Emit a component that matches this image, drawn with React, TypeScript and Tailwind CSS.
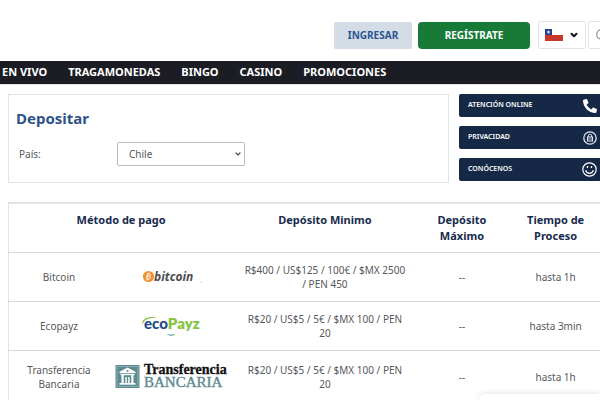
import type { ReactNode } from "react"
import { ChevronDown, Search } from "lucide-react"
import { FaPhone } from "react-icons/fa"

interface PaymentMethod {
  name: string
  logo: ReactNode
  min: string
  max: string
  time: string
}

const navItems = ["EN VIVO", "TRAGAMONEDAS", "BINGO", "CASINO", "PROMOCIONES"]

function ChileFlag() {
  return (
    <svg width="18" height="12" viewBox="0 0 18 12" aria-label="Chile" role="img">
      <rect width="18" height="12" fill="#fff" />
      <rect y="6" width="18" height="6" fill="#c9372c" />
      <rect width="7" height="6" fill="#24418f" />
      <path d="M3.5 1.2l.5 1.3h1.4l-1.1.9.4 1.3-1.2-.8-1.2.8.4-1.3-1.1-.9H3z" fill="#fff" />
    </svg>
  )
}

function LockBadge() {
  return (
    <svg width="14" height="14" viewBox="0 0 14 14" fill="none" stroke="#dfe6ef">
      <circle cx="7" cy="7" r="6.2" strokeWidth="1.3" />
      <path d="M5.3 6V4.9a1.7 1.7 0 0 1 3.4 0V6" strokeWidth="1" />
      <rect x="4.5" y="6" width="5" height="4" strokeWidth="1" />
      <path d="M5 8h4" strokeWidth="0.8" />
    </svg>
  )
}

function SmileBadge() {
  return (
    <svg width="15" height="15" viewBox="0 0 15 15" fill="none" stroke="#fff">
      <circle cx="7.5" cy="7.5" r="6.7" strokeWidth="1.2" />
      <path d="M3.6 8.2c.8 2.200 2.200 3.100 3.900 3.100s3.100-.9 3.900-3.100" strokeWidth="1.2" />
      <path d="M5.500 4v2M9.500 4v2" strokeWidth="1.300" />
    </svg>
  )
}

function BitcoinLogo() {
  return (
    <svg width="64" height="20" viewBox="0 0 64 20" role="img" aria-label="bitcoin">
      <circle cx="9.5" cy="9.5" r="5.6" fill="#ee9330" />
      <g stroke="#fff" fill="none" strokeWidth="1">
        <path d="M8.500 6.700l-1 5.500M8.400 6.900h1.800c1.600 0 1.500 2.200-.1 2.400H8.100M10.100 9.300c1.700.1 1.500 2.700-.4 2.800H7.500" />
        <path d="M10 5.500l-.2 1.200M8.900 12.300l-.2 1.200" strokeWidth="0.7" />
      </g>
      <text x="15" y="14" fontFamily="'Open Sans', sans-serif" fontSize="12" fontStyle="italic" fontWeight="700" fill="#4d4d4f">
        bitcoin
      </text>
      <circle cx="62" cy="15" r="0.6" fill="#b9bcc0" />
    </svg>
  )
}

function EcopayzLogo() {
  return (
    <svg width="60" height="22" viewBox="0 0 60 22" role="img" aria-label="ecoPayz">
      <path d="M1 8.5C2 2.2 11 .8 16 3.200 10 2.400 4 3.400 1.800 8.500z" fill="#7fbf4d" />
      <text x="3" y="14" fontFamily="Lato, sans-serif" fontSize="15" fontWeight="900" fill="#214a87">
        eco<tspan fill="#86c440" fontWeight="800">Payz</tspan>
      </text>
      <path d="M26 19c2.500 1 6 1 8.500 0-2 2.200-6.500 2.200-8.500 0z" fill="#2f8f86" />
    </svg>
  )
}

function BankTransferLogo() {
  return (
    <svg width="114" height="32" viewBox="0 0 114 32" role="img" aria-label="Transferencia Bancaria">
      <rect x="1.5" y="4" width="24" height="23" fill="#5d8a90" />
      <rect x="3" y="5.5" width="21" height="20" fill="none" stroke="#a9c3c6" strokeWidth="0.6" />
      <g fill="#fff">
        <path d="M13.5 6.5l8 4.200v1.600h-16v-1.600z" />
        <rect x="6.500" y="13" width="14" height="1.200" />
        <rect x="7.500" y="14" width="2.200" height="8" />
        <rect x="11.300" y="16" width="1.500" height="6" />
        <rect x="14.200" y="16" width="1.500" height="6" />
        <rect x="17.300" y="14" width="2.200" height="8" />
        <rect x="5.500" y="22" width="16" height="1.700" />
      </g>
      <circle cx="13.500" cy="10" r="1" fill="#5d8a90" />
      <text x="30" y="13" fontFamily="'Liberation Serif', serif" fontSize="14" fontWeight="700" fill="#111" stroke="#111" strokeWidth="0.3">
        Transferencia
      </text>
      <text x="30" y="26" fontFamily="'Liberation Serif', serif" fontSize="15" fill="#5d8a90" stroke="#5d8a90" strokeWidth="0.4">
        BANCARIA
      </text>
    </svg>
  )
}

const methods: PaymentMethod[] = [
  { name: "Bitcoin", logo: <BitcoinLogo />, min: "R$400 / US$125 / 100€ / $MX 2500 /\u00a0PEN 450", max: "--", time: "hasta 1h" },
  { name: "Ecopayz", logo: <EcopayzLogo />, min: "R$20 / US$5 / 5€ / $MX 100 / PEN 20", max: "--", time: "hasta 3min" },
  { name: "Transferencia Bancaria", logo: <BankTransferLogo />, min: "R$20 / US$5 / 5€ / $MX 100 / PEN 20", max: "--", time: "hasta 1h" },
]

const sideLinks = [
  { label: "ATENCIÓN ONLINE", icon: <FaPhone className="size-3.5 -scale-x-100 text-white" /> },
  { label: "PRIVACIDAD", icon: <LockBadge /> },
  { label: "CONÓCENOS", icon: <SmileBadge /> },
]

function Header() {
  return (
    <header>
      <div className="-mr-7 flex h-[61px] items-start justify-end pt-[21px]">
        <div className="flex items-center">
          <button className="h-[27px] w-[78px] rounded-xs bg-[#d4dce6] text-[10px] font-bold text-[#2c5590]">INGRESAR</button>
          <button className="ml-1.5 h-[27px] w-28 rounded-sm bg-[#177a37] text-[10px] font-bold text-white">REGÍSTRATE</button>
          <button aria-label="País e idioma" className="ml-2 flex h-7 w-12 items-center justify-between rounded-xs border border-[#e2e4e9] px-1.5">
            <ChileFlag />
            <ChevronDown className="size-2.5 text-[#15151f]" strokeWidth={5} />
          </button>
          <button aria-label="Buscar" className="ml-0.5 flex h-7 w-10 items-center rounded-xs border border-[#e2e4e9] pl-1.5">
            <Search className="size-3.5 text-[#85878c]" />
          </button>
        </div>
      </div>
      <nav className="flex h-6 items-center gap-[21px] border-b border-[#e3e7f2] bg-[#1b1c24] pl-0.5 text-[11px] font-bold text-white">
        {navItems.map((item) => (
          <a key={item} href="#" className="whitespace-nowrap">
            {item}
          </a>
        ))}
      </nav>
    </header>
  )
}

export default function App() {
  return (
    <div className="relative h-screen overflow-hidden bg-white font-['Noto_Sans',sans-serif] text-[10px] text-[#55585c]">
      <Header />

      {/* Deposit form and side links */}
      <div className="mt-[9px] flex gap-2.5 pl-2">
        <section className="h-[89px] flex-1 border border-[#dfe3e7] px-[7px] pt-3">
          <h1 className="text-[15px] leading-[22px] font-bold text-[#2f5288]">Depositar</h1>
          <div className="mt-[13px] flex items-center pl-[3px]">
            <label htmlFor="country" className="w-[98px]">
              País:
            </label>
            <div className="relative">
              <select id="country" className="h-6 w-32 appearance-none rounded-xs border border-[#b9bcc0] bg-white pl-[11px]">
                <option>Chile</option>
              </select>
              <ChevronDown className="pointer-events-none absolute top-2 right-[3px] size-2" strokeWidth={4} />
            </div>
          </div>
        </section>
        <aside className="flex w-[141px] flex-col gap-[9px]">
          {sideLinks.map((link) => (
            <a key={link.label} href="#" className="flex h-[23px] items-center justify-between rounded-l-xs bg-[#152947] pr-[3px] pl-[9px] text-[7px] font-semibold text-white">
              {link.label}
              {link.icon}
            </a>
          ))}
        </aside>
      </div>

      {/* Payment methods */}
      <div className="mt-[19px] pl-2">
        <table className="w-full table-fixed border-collapse border-t-2 border-l border-[#dfe3e7] text-center leading-[14px]">
          <colgroup>
            <col className="w-[17%]" />
            <col className="w-[21%]" />
            <col className="w-[31%]" />
            <col className="w-[16%]" />
            <col className="w-[15%]" />
          </colgroup>
          <thead>
            <tr className="h-[49px] align-top text-[11px] leading-4 text-[#182b4d]">
              <th colSpan={2} className="pt-2">Método de pago</th>
              <th className="pt-2">Depósito Minimo</th>
              <th className="pt-2 pr-4 pl-3">Depósito Máximo</th>
              <th className="px-3 pt-2">Tiempo de Proceso</th>
            </tr>
          </thead>
          <tbody>
            {methods.map((method) => (
              <tr key={method.name} className="h-[49px] border-t border-[#cfd9de] last:h-[54px]">
                <td className="px-4">{method.name}</td>
                <td>
                  <div className="flex justify-center">{method.logo}</div>
                </td>
                <td className="px-2">{method.min}</td>
                <td className="pr-1">{method.max}</td>
                <td>{method.time}</td>
              </tr>
            ))}
          </tbody>
        </table>
      </div>

      {/* Chat widget peeking from the bottom edge */}
      <div className="absolute right-0 bottom-0 h-1.5 w-[121px] rounded-tl-md bg-white shadow-[0_0_6px_rgba(0,0,0,0.15)]" />
    </div>
  )
}
